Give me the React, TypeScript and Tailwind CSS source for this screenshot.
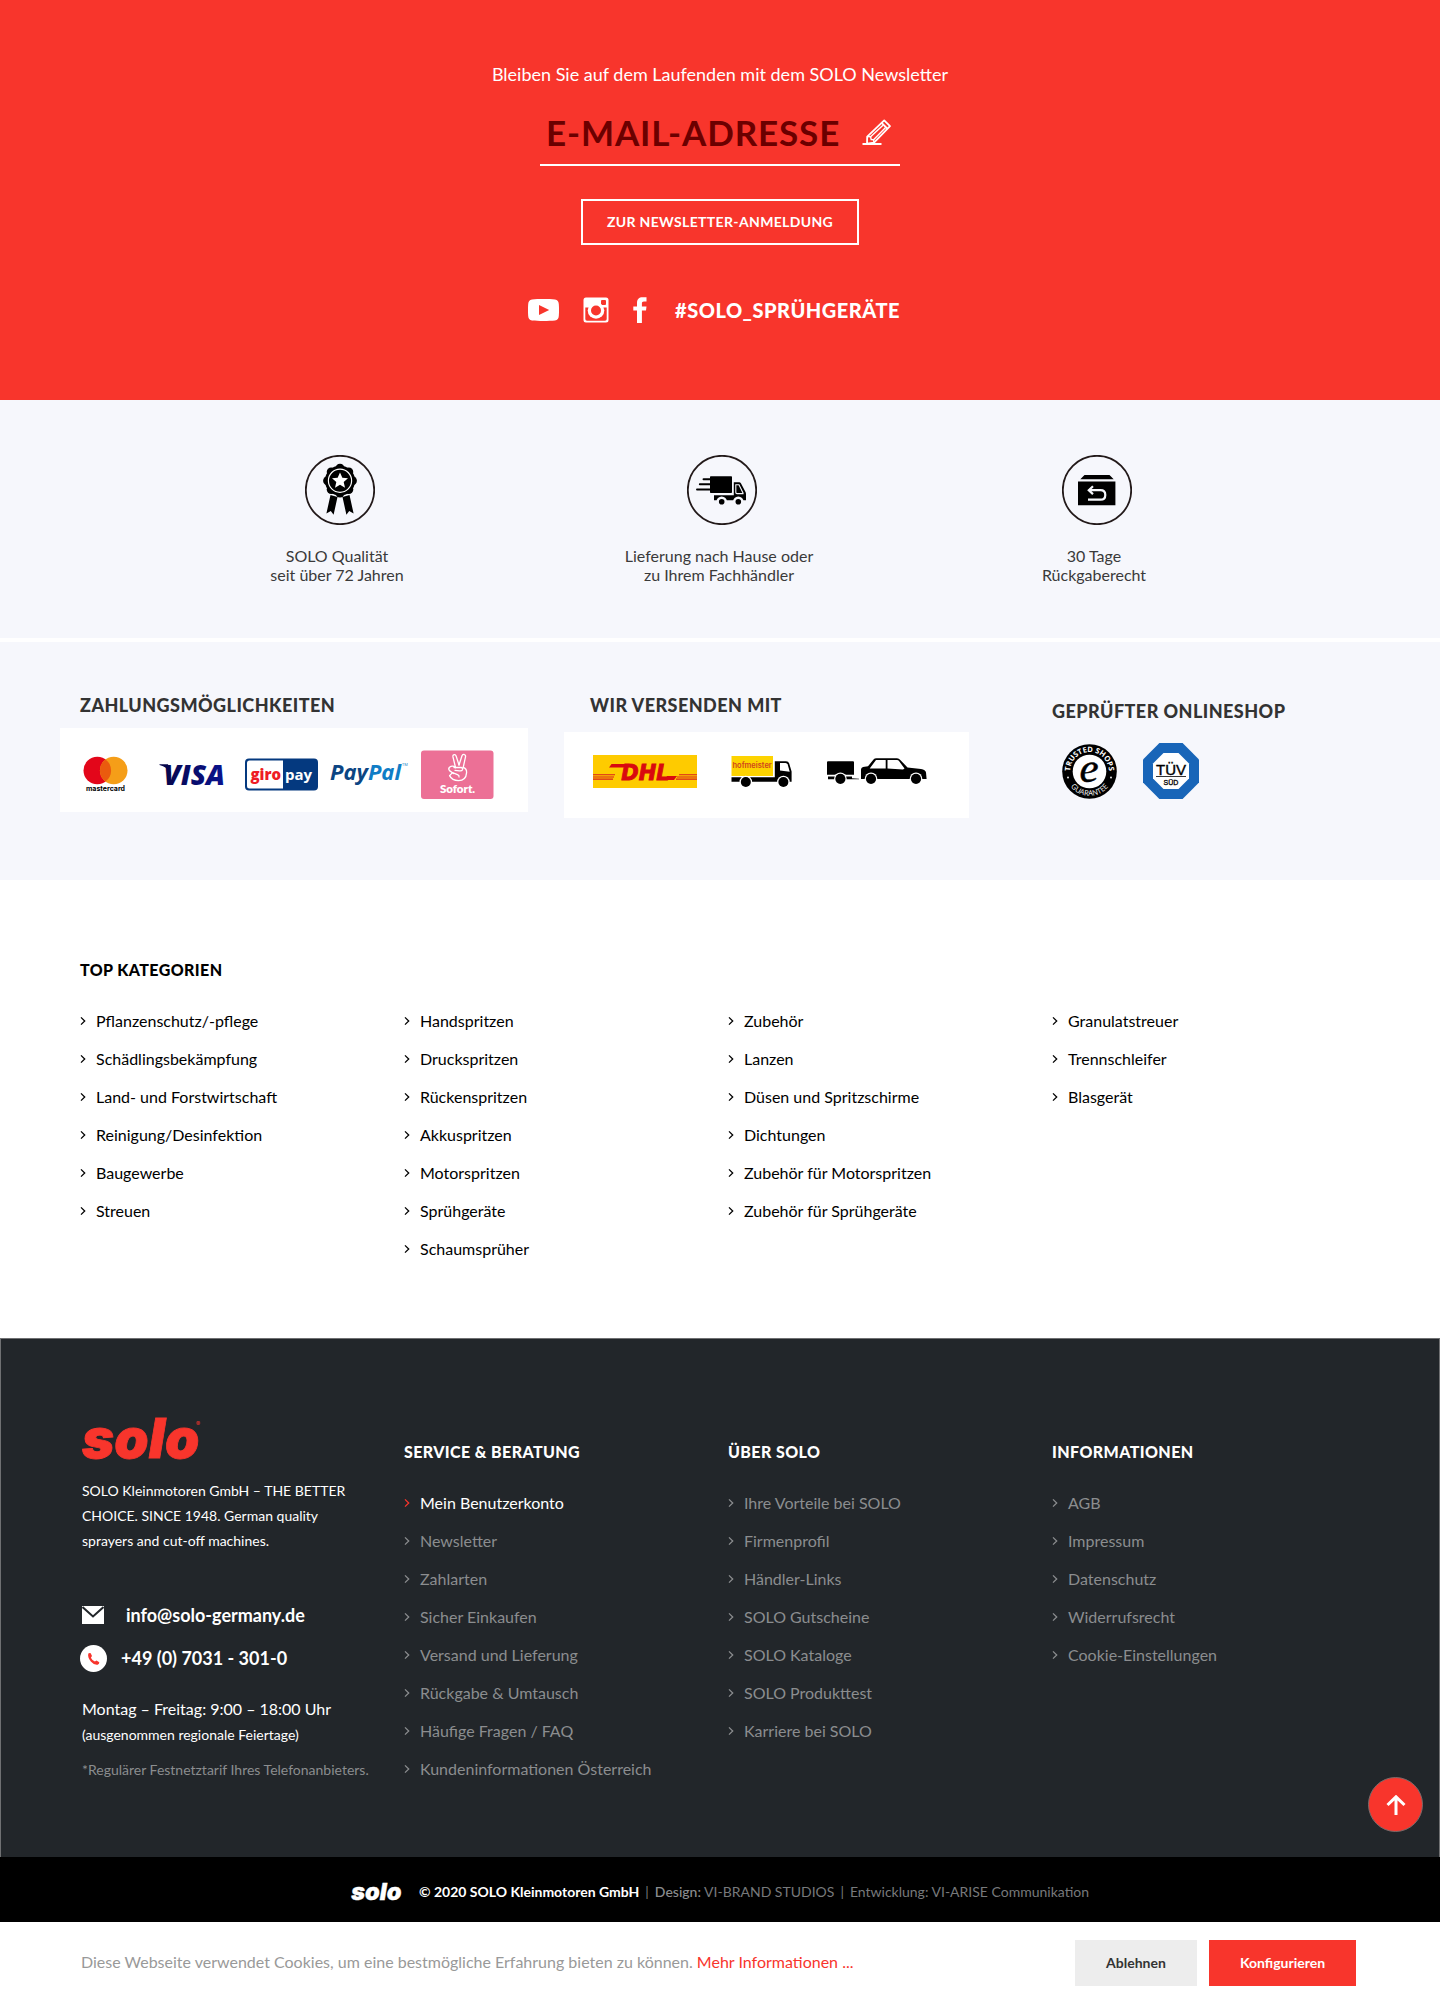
import React from 'react';

const categories: string[][] = [
  ['Pflanzenschutz/-pflege', 'Schädlingsbekämpfung', 'Land- und Forstwirtschaft', 'Reinigung/Desinfektion', 'Baugewerbe', 'Streuen'],
  ['Handspritzen', 'Druckspritzen', 'Rückenspritzen', 'Akkuspritzen', 'Motorspritzen', 'Sprühgeräte', 'Schaumsprüher'],
  ['Zubehör', 'Lanzen', 'Düsen und Spritzschirme', 'Dichtungen', 'Zubehör für Motorspritzen', 'Zubehör für Sprühgeräte'],
  ['Granulatstreuer', 'Trennschleifer', 'Blasgerät'],
];

const footerColumns: { title: string; links: string[] }[] = [
  {
    title: 'SERVICE & BERATUNG',
    links: ['Mein Benutzerkonto', 'Newsletter', 'Zahlarten', 'Sicher Einkaufen', 'Versand und Lieferung', 'Rückgabe & Umtausch', 'Häufige Fragen / FAQ', 'Kundeninformationen Österreich'],
  },
  {
    title: 'ÜBER SOLO',
    links: ['Ihre Vorteile bei SOLO', 'Firmenprofil', 'Händler-Links', 'SOLO Gutscheine', 'SOLO Kataloge', 'SOLO Produkttest', 'Karriere bei SOLO'],
  },
  { title: 'INFORMATIONEN', links: ['AGB', 'Impressum', 'Datenschutz', 'Widerrufsrecht', 'Cookie-Einstellungen'] },
];

function Chevron({ className = '' }: { className?: string }) {
  return (
    <svg aria-hidden="true" width="6" height="10" viewBox="0 0 6 10" className={`shrink-0 ${className}`} fill="none" stroke="currentColor" strokeWidth="1.3">
      <path d="M1 1.4 L4.7 5 L1 8.6" />
    </svg>
  );
}

function LinkList({ items, tone, activeFirst = false }: { items: string[]; tone: string; activeFirst?: boolean }) {
  return (
    <ul>
      {items.map((item, i) => {
        const active = activeFirst && i === 0;
        return (
          <li key={item} className="flex h-[38px] items-center">
            <a href="#" className={`flex items-center gap-[10px] text-base leading-6 whitespace-nowrap ${active ? 'text-white' : tone}`}>
              <Chevron className={active ? 'text-[#f8352c]' : ''} />
              {item}
            </a>
          </li>
        );
      })}
    </ul>
  );
}

function SoloLogo({ className, withMark = false }: { className: string; withMark?: boolean }) {
  return (
    <svg role="img" aria-label="solo" viewBox="0 0 120 42" className={`overflow-visible ${className}`} fill="currentColor">
      <text x="0" y="40" fontFamily="Inter, sans-serif" fontWeight="900" fontStyle="italic" fontSize="55" stroke="currentColor" strokeWidth="0.8">
        solo
      </text>
      {withMark && (
        <text x="114" y="8" fontFamily="Inter, sans-serif" fontSize="6">
          ®
        </text>
      )}
    </svg>
  );
}

function PencilIcon() {
  return (
    <svg aria-hidden="true" width="30" height="28" viewBox="0 0 30 28" className="shrink-0" fill="none" stroke="#fff" strokeWidth="1.8" strokeLinejoin="round">
      <path d="M5.2 18.6 L22.2 2.4 L28 8.2 L12 24.6 L5 25.6 Z" />
      <path d="M19.6 4.8 L25.6 10.8" />
      <path d="M8.6 18.8 L21 7.2 M11.6 21.8 L23.6 9.4" strokeWidth="1.4" />
      <path d="M5.2 18.6 L8.6 18.8 L9.2 21.6 L11.6 21.8 L12 24.6" strokeWidth="1.4" />
      <path d="M0.5 26 H19.5" strokeWidth="2" />
    </svg>
  );
}

function YoutubeIcon() {
  return (
    <svg aria-hidden="true" width="31" height="22" viewBox="0 0 31 22">
      <path fill="#fff" fillRule="evenodd" d="M4 .5 C10 -.1 21 -.1 27 .5 C29.600 .8 30.600 2.500 30.800 5 C31.100 9 31.100 13 30.800 17 C30.600 19.600 29.600 21.200 27 21.500 C21 22.100 10 22.100 4 21.500 C1.400 21.200 .4 19.600 .2 17 C-.1 13 -.1 9 .2 5 C.4 2.500 1.400 .8 4 .5 Z M11 6 V16 L21.200 11 Z" />
    </svg>
  );
}

function InstagramIcon() {
  return (
    <svg aria-hidden="true" width="26" height="26" viewBox="0 0 26 26">
      <rect x="0.500" y="0.500" width="25" height="25" rx="2.500" fill="#fff" />
      <path d="M2.300 10.500 H23.700 V22 Q23.700 23.700 22 23.700 H4 Q2.300 23.700 2.300 22 Z" fill="#f8352c" />
      <rect x="18" y="3" width="5" height="5" rx="1" fill="#f8352c" />
      <circle cx="13" cy="13.500" r="8.300" fill="#fff" />
      <circle cx="13" cy="13.500" r="5" fill="#f8352c" />
    </svg>
  );
}

function FacebookIcon() {
  return (
    <svg aria-hidden="true" width="14" height="26" viewBox="0 0 14 26">
      <path fill="#fff" d="M4 26 V13.600 H0.300 V9.400 H4 V6 C4 2.300 6 .3 9.600 .3 H13.500 V4.500 H11 C9.400 4.500 8.900 5.200 8.900 6.600 V9.400 H13.500 L13 13.600 H8.900 V26 Z" />
    </svg>
  );
}

function MedalIcon() {
  const bumps = [0, 1, 2, 3, 4, 5, 6, 7];
  return (
    <svg aria-hidden="true" width="70" height="70" viewBox="0 0 70 70">
      <circle cx="35" cy="35" r="34.200" fill="none" stroke="#231a1a" strokeWidth="1.800" />
      <path d="M25.500 40 L32.500 42 L28.600 59.800 L25.800 56 L21.400 58.500 Z M44.500 40 L37.500 42 L41.400 59.800 L44.200 56 L48.600 58.500 Z" />
      <circle cx="35" cy="25.700" r="15" />
      {bumps.map((n) => (
        <circle key={n} cx={35 + 12.400 * Math.cos((n * Math.PI) / 4)} cy={25.700 + 12.400 * Math.sin((n * Math.PI) / 4)} r="4.500" />
      ))}
      <circle cx="35" cy="25.700" r="11.600" fill="none" stroke="#fff" strokeWidth="1.200" />
      <path fill="#fff" d="M35 17.400 L37.350 22.700 L43 23.200 L38.700 27 L40 32.700 L35 29.700 L30 32.700 L31.300 27 L27 23.200 L32.650 22.700 Z" />
    </svg>
  );
}

function DeliveryIcon() {
  return (
    <svg aria-hidden="true" width="70" height="70" viewBox="0 0 70 70">
      <circle cx="35" cy="35" r="34.200" fill="none" stroke="#231a1a" strokeWidth="1.800" />
      <rect x="23" y="21.300" width="22" height="16.800" rx="0.800" />
      <path d="M16.500 24.300 H24 M12.800 29.300 H24 M10 34.500 H24" stroke="#000" strokeWidth="1.900" strokeLinecap="round" />
      <path d="M27 40.300 H46.800 V27.300 H52.200 Q53.300 27.300 53.900 28.300 L58 36 Q59 37.600 59 39 V45.300 H27 Z" />
      <path d="M48.800 29.800 H52 L56 38 V38.600 H50 Q48.800 38.600 48.800 37.600 Z" fill="none" stroke="#f6f7fc" strokeWidth="1.100" />
      <circle cx="34.700" cy="46.700" r="5.300" fill="#f6f7fc" />
      <circle cx="51.300" cy="46.700" r="5.300" fill="#f6f7fc" />
      <circle cx="34.700" cy="46.700" r="2.800" />
      <circle cx="51.300" cy="46.700" r="2.800" />
    </svg>
  );
}

function ReturnIcon() {
  return (
    <svg aria-hidden="true" width="70" height="70" viewBox="0 0 70 70">
      <circle cx="35" cy="35" r="34.200" fill="none" stroke="#231a1a" strokeWidth="1.800" />
      <path d="M22.500 20 H47.500 L51.700 24.200 H18.300 Z M16 26.400 H53.400 V50.200 H16 Z" />
      <path d="M31 31.300 L26.800 35.200 L31 39.100 M27 35.200 H38.500 Q43.300 35.200 43.300 39.900 Q43.300 44.700 38.500 44.700 H26" fill="none" stroke="#f6f7fc" strokeWidth="2.200" />
    </svg>
  );
}

function MastercardLogo() {
  return (
    <svg role="img" aria-label="mastercard" width="66" height="38" viewBox="0 0 66 38">
      <circle cx="17.300" cy="14.500" r="13.800" fill="#e3061a" />
      <circle cx="33.700" cy="14.500" r="13.800" fill="#f59e18" />
      <path d="M25.500 3.400 A13.800 13.800 0 0 1 25.500 25.600 A13.800 13.800 0 0 1 25.500 3.400 Z" fill="#ea5b0e" />
      <text x="25.500" y="34.500" textAnchor="middle" fontFamily="Inter, sans-serif" fontWeight="700" fontSize="7">mastercard</text>
    </svg>
  );
}

function VisaLogo() {
  return (
    <svg role="img" aria-label="VISA" width="75" height="46" viewBox="0 -8 75 46">
      <defs>
        <linearGradient id="visa" x1="0" x2="1">
          <stop offset="0" stopColor="#06064a" />
          <stop offset="1" stopColor="#0a1390" />
        </linearGradient>
      </defs>
      <path d="M1.500 4.200 H10 L13 14 Q9 6.500 1.500 5 Z" fill="#06064a" />
      <text x="5.500" y="24.600" fontFamily="'Open Sans', sans-serif" fontWeight="800" fontStyle="italic" fontSize="28" fill="url(#visa)">VISA</text>
    </svg>
  );
}

function GiropayLogo() {
  return (
    <svg role="img" aria-label="giropay" width="73" height="33" viewBox="0 0 73 33">
      <rect x="0" y="0.500" width="73" height="32" rx="4" fill="#04397f" />
      <path d="M4.500 2.500 H38 V30.500 H4.500 Q2 30.500 2 28 V5 Q2 2.500 4.500 2.500 Z" fill="#fff" />
      <text x="5.500" y="21.500" fontFamily="'Open Sans', sans-serif" fontWeight="800" fontSize="15" fill="#ee1c25">giro</text>
      <text x="40" y="21.500" fontFamily="'Open Sans', sans-serif" fontWeight="700" fontSize="15" fill="#fff">pay</text>
    </svg>
  );
}

function PaypalLogo() {
  return (
    <svg role="img" aria-label="PayPal" width="79" height="42" viewBox="0 -6 79 42">
      <text x="0" y="20" fontFamily="'Open Sans', sans-serif" fontWeight="700" fontStyle="italic" fontSize="22" fill="#0b4583">
        Pay<tspan fill="#0f7dc6">Pal</tspan>
      </text>
      <text x="72" y="6" fontFamily="'Open Sans', sans-serif" fontSize="4" fill="#0f7dc6">TM</text>
    </svg>
  );
}

function SofortLogo() {
  return (
    <svg role="img" aria-label="Sofort." width="73" height="49" viewBox="0 0 73 49">
      <rect x="0" y="0.500" width="72.500" height="48.500" rx="3" fill="#ec7096" />
      <g fill="none" stroke="#fff" strokeWidth="1.300" strokeLinecap="round" strokeLinejoin="round">
        <path d="M34.500 17.500 L32 7 Q31.600 5 33.200 4.700 Q34.600 4.400 35.200 6.300 L38 15" />
        <path d="M38 15 L41 5.800 Q41.600 4.100 43.200 4.500 Q44.900 5 44.500 6.800 L42.200 17.500" />
        <path d="M34.500 17.500 Q31.500 15 28.500 17.300 Q27 18.800 28.500 20.600 L32.500 23.500" />
        <path d="M42.200 17.500 Q45.800 18.300 45.600 22.600 Q45 30.600 37.500 30.600 Q31 30.600 28.600 25.600" />
        <path d="M28.600 25.600 L31.500 22.600 L36.500 24.600 Q38.500 25.500 38 27 M33 17.500 H40 Q42 17.700 41.500 19.700 Q41 21 38.500 20.800 L34 20.300" />
      </g>
      <text x="36.500" y="43" textAnchor="middle" fontFamily="Lato, sans-serif" fontWeight="800" fontSize="11.500" fill="#fff">Sofort.</text>
    </svg>
  );
}

function DhlLogo() {
  return (
    <svg role="img" aria-label="DHL" width="104" height="33" viewBox="0 0 104 33">
      <rect width="104" height="33" fill="#fecb00" />
      <path d="M0 19.800 H22 M0 22 H21 M0 24.100 H20 M86 19.800 H104 M84 22 H104 M83 24.100 H104" stroke="#d9201d" strokeWidth="1.100" />
      <path d="M18.500 9 H34 V12.500 H16 Z" fill="#d9090f" />
      <text x="52.500" y="24.700" textAnchor="middle" fontFamily="'DejaVu Sans', sans-serif" fontWeight="700" fontStyle="italic" fontSize="21" fill="#d9090f" stroke="#d9090f" strokeWidth="0.900">DHL</text>
      <path d="M74 21 H84 L81 24.900 H72 Z" fill="#d9090f" />
    </svg>
  );
}

function HofmeisterLogo() {
  return (
    <svg role="img" aria-label="hofmeister" width="62" height="33" viewBox="0 0 62 33">
      <rect x="0.500" y="1" width="41.500" height="20" fill="#fdd300" />
      <path d="M.5 22.300 H43.800 V6.300 H55 Q57.500 6.300 58.200 8.500 L60.600 16.500 V26.800 H.5 Z" />
      <path d="M49 8 H54.500 Q56.200 8 56.700 9.500 L58.700 16.700 L49 15.500 Z" fill="#fff" />
      <circle cx="14.800" cy="27" r="6.300" fill="#fff" />
      <circle cx="52.400" cy="27" r="6.300" fill="#fff" />
      <circle cx="14.800" cy="27" r="5" />
      <circle cx="52.400" cy="27" r="5" />
      <text x="21.200" y="13.300" textAnchor="middle" fontFamily="Inter, sans-serif" fontWeight="600" fontSize="7.500" fill="#d0431c">hofmeister</text>
    </svg>
  );
}

function TrailerLogo() {
  return (
    <svg role="img" aria-label="Auto mit Anhänger" width="101" height="33" viewBox="0 0 101 33">
      <path d="M1 6.300 H26 Q27 6.300 27 7.300 V19.800 H0 V7.300 Q0 6.300 1 6.300 Z M1 21.600 H25 V23.300 L32 23.700 V24.300 L24 24.300 H1 Z" />
      <path d="M34 24 V14.500 Q34 12.500 36 12 L41 11.300 L46.500 4.600 Q47.500 3.300 49.500 3.300 H70 Q72 3.300 73.300 4.900 L80.500 12.500 L94 14 Q98.500 14.800 99 17.500 L99.600 24 Z" />
      <path d="M49 5 H58.700 V13.500 H42.700 Z M60.500 5 H70 Q71.300 5 72 6 L77.500 13.500 L76 14.500 L60.500 13.500 Z" fill="#fff" />
      <circle cx="13.400" cy="23.800" r="6.300" fill="#fff" />
      <circle cx="44" cy="23.800" r="6.300" fill="#fff" />
      <circle cx="89" cy="23.800" r="6.300" fill="#fff" />
      <circle cx="13.400" cy="23.800" r="5.100" />
      <circle cx="44" cy="23.800" r="5.100" />
      <circle cx="89" cy="23.800" r="5.100" />
    </svg>
  );
}

function TrustedShopsBadge() {
  return (
    <svg role="img" aria-label="Trusted Shops Guarantee" width="55" height="55" viewBox="0 0 55 55">
      <defs>
        <path id="arc-top" d="M8.900 32.500 A19.300 19.300 0 1 1 46.100 32.500" />
        <path id="arc-bottom" d="M3.200 27.500 A24.300 24.300 0 0 0 51.800 27.500" />
      </defs>
      <circle cx="27.500" cy="27.500" r="27.300" />
      <circle cx="27.500" cy="27.500" r="16.800" fill="#fff" />
      <g fontFamily="'Open Sans', sans-serif" fontSize="7.500" fill="#fff" textAnchor="middle">
        <text fontWeight="700"><textPath href="#arc-top" startOffset="50%">TRUSTED SHOPS</textPath></text>
        <text fontWeight="400" fontSize="7.500"><textPath href="#arc-bottom" startOffset="50%">GUARANTEE</textPath></text>
      </g>
      <circle cx="6" cy="33.500" r="0.900" fill="#fff" />
      <circle cx="49" cy="33.500" r="0.900" fill="#fff" />
      <text x="27" y="37.500" textAnchor="middle" fontFamily="'Liberation Serif', serif" fontStyle="italic" fontSize="43" stroke="#000" strokeWidth="0.500">e</text>
    </svg>
  );
}

function TuevBadge() {
  return (
    <svg role="img" aria-label="TÜV SÜD" width="56" height="56" viewBox="0 0 56 56">
      <path d="M16.400 0 H39.600 L56 16.400 V39.600 L39.600 56 H16.400 L0 39.600 V16.400 Z" fill="#1865b8" />
      <path d="M20.500 10 H35.500 L46 20.500 V35.500 L35.500 46 H20.500 L10 35.500 V20.500 Z" fill="#fff" />
      <text x="28" y="31.500" textAnchor="middle" fontFamily="'Liberation Sans', sans-serif" fontSize="15" stroke="#000" strokeWidth="0.400">TÜV</text>
      <path d="M13 33.500 H43" stroke="#000" strokeWidth="0.800" />
      <text x="28" y="42" textAnchor="middle" fontFamily="'Liberation Sans', sans-serif" fontSize="7" stroke="#000" strokeWidth="0.300">SÜD</text>
    </svg>
  );
}

function Newsletter() {
  return (
    <section className="flex flex-col items-center bg-[#f8352c] pt-[62px] pb-[75px] text-white">
      <p className="text-lg leading-6">Bleiben Sie auf dem Laufenden mit dem SOLO Newsletter</p>
      <form className="flex w-full flex-col items-center" onSubmit={(e) => e.preventDefault()}>
        <div className="mt-[23px] flex w-full max-w-[360px] items-center border-b-2 border-white pr-2 pb-[9px] pl-[6px]">
          <input
            type="email"
            aria-label="E-Mail-Adresse"
            placeholder="E-MAIL-ADRESSE"
            className="h-[46px] w-0 min-w-0 flex-1 bg-transparent text-[35px] font-bold tracking-wide text-[#6b0000] placeholder:text-[#6b0000] placeholder:opacity-100 focus:outline-none"
          />
          <PencilIcon />
        </div>
        <button type="submit" className="mt-[33px] h-[46px] w-[278px] border-2 border-white text-sm font-bold tracking-wide">
          ZUR NEWSLETTER-ANMELDUNG
        </button>
      </form>
      <div className="mt-[50px] flex items-center gap-6 pr-3">
        <a href="#" aria-label="YouTube"><YoutubeIcon /></a>
        <a href="#" aria-label="Instagram"><InstagramIcon /></a>
        <a href="#" aria-label="Facebook"><FacebookIcon /></a>
        <a href="#" className="pl-1 text-xl leading-[30px] font-black tracking-wide">#SOLO_SPRÜHGERÄTE</a>
      </div>
    </section>
  );
}

function Features() {
  const items = [
    { icon: <MedalIcon />, lines: ['SOLO Qualität', 'seit über 72 Jahren'] },
    { icon: <DeliveryIcon />, lines: ['Lieferung nach Hause oder', 'zu Ihrem Fachhändler'] },
    { icon: <ReturnIcon />, lines: ['30 Tage', 'Rückgaberecht'] },
  ];
  return (
    <section className="grid grid-cols-[380fr_384fr_366fr] bg-[#f6f7fc] pt-[55px] pr-[160px] pb-[54px] pl-[150px]">
      {items.map((item) => (
        <div key={item.lines[0]} className="flex flex-col items-center">
          {item.icon}
          <p className="mt-[21px] pr-[6px] text-center text-base leading-[19px] text-[#3a3a3a]">
            {item.lines[0]}
            <br />
            {item.lines[1]}
          </p>
        </div>
      ))}
    </section>
  );
}

function Partners() {
  const heading = 'text-lg leading-6 font-black tracking-wide text-[#333]';
  return (
    <section className="mt-1 grid grid-cols-[504fr_488fr_328fr] items-start bg-[#f6f7fc] px-[60px] pt-[51px] pb-[62px]">
      <div>
        <h2 className={`pl-5 ${heading}`}>ZAHLUNGSMÖGLICHKEITEN</h2>
        <div className="mt-[11px] mr-9 flex items-center gap-3 bg-white pt-[22px] pb-[13px] pl-5">
          <MastercardLogo />
          <VisaLogo />
          <GiropayLogo />
          <PaypalLogo />
          <SofortLogo />
        </div>
      </div>
      <div>
        <h2 className={`pl-[26px] ${heading}`}>WIR VERSENDEN MIT</h2>
        <div className="mt-[15px] mr-[83px] flex items-center gap-[34px] bg-white pt-[23px] pb-[30px] pl-[29px]">
          <DhlLogo />
          <HofmeisterLogo />
          <TrailerLogo />
        </div>
      </div>
      <div className="pt-[6px]">
        <h2 className={heading}>GEPRÜFTER ONLINESHOP</h2>
        <div className="mt-5 flex items-center gap-[26px] pl-[10px]">
          <TrustedShopsBadge />
          <TuevBadge />
        </div>
      </div>
    </section>
  );
}

function Categories() {
  return (
    <section className="px-20 pt-[78px] pb-[70px] text-black">
      <h2 className="mb-5 text-base leading-6 font-black tracking-wide">TOP KATEGORIEN</h2>
      <div className="grid grid-cols-4 gap-4">
        {categories.map((column) => (
          <LinkList key={column[0]} items={column} tone="text-black" />
        ))}
      </div>
    </section>
  );
}

function Footer() {
  return (
    <footer className="relative border border-b-0 border-[#6f7072] bg-[#22262a] px-[79px] pt-[79px] pb-[69px] text-white">
      <div className="grid grid-cols-4 gap-4">
        <div className="pl-[2px]">
          <SoloLogo className="h-[42px] w-[120px] text-[#f8352c]" withMark />
          <p className="mt-[18px] max-w-[290px] text-sm leading-[25px]">
            SOLO Kleinmotoren GmbH – THE BETTER
            <br />
            CHOICE. SINCE 1948. German quality
            <br />
            sprayers and cut-off machines.
          </p>
          <a href="mailto:info@solo-germany.de" className="mt-[50px] flex items-center gap-[22px] text-lg leading-6 font-bold">
            <svg aria-hidden="true" width="22" height="18" viewBox="0 0 22 18" className="shrink-0">
              <path fill="#fff" d="M0 0 H22 V18 H0 Z" />
              <path d="M.5 1 L11 10.500 L21.500 1" fill="none" stroke="#22262a" strokeWidth="2" />
            </svg>
            info@solo-germany.de
          </a>
          <a href="tel:+49703130101" className="mt-[18px] -ml-[2px] flex items-center gap-[14px] text-lg leading-[27px] font-bold">
            <svg aria-hidden="true" width="27" height="27" viewBox="0 0 27 27" className="shrink-0">
              <circle cx="13.500" cy="13.500" r="13.500" fill="#fff" />
              <path fill="#f8352c" d="M8.300 8.600 Q9.500 7.500 10.700 8.200 L12 11 L10.900 12.700 Q12.200 15.600 14.900 16.500 L16.500 15.600 L19.300 17.200 Q19.400 19 17.700 19.700 Q14 20.300 10.800 16.600 Q7.400 12.500 8.300 8.600 Z" />
            </svg>
            +49 (0) 7031 - 301-0
          </a>
          <p className="mt-[24px] text-base leading-[26px]">Montag – Freitag: 9:00 – 18:00 Uhr</p>
          <p className="text-sm leading-[26px]">(ausgenommen regionale Feiertage)</p>
          <p className="mt-[9px] text-sm leading-[26px] whitespace-nowrap text-[#8b8d8f]">*Regulärer Festnetztarif Ihres Telefonanbieters.</p>
        </div>
        {footerColumns.map((column, i) => (
          <div key={column.title} className="pt-[22px]">
            <h2 className="mb-5 text-base leading-6 font-black tracking-wide">{column.title}</h2>
            <LinkList items={column.links} tone="text-[#8b8d8f]" activeFirst={i === 0} />
          </div>
        ))}
      </div>
      <button
        type="button"
        aria-label="Nach oben"
        className="absolute right-4 bottom-[25px] flex size-[55px] items-center justify-center rounded-full border border-[#7b6a6a] bg-[#f8352c]"
      >
        <svg aria-hidden="true" width="20" height="20" viewBox="0 0 20 20" fill="none" stroke="#fff" strokeWidth="3">
          <path d="M10 20 V2 M1.500 10 L10 1.800 L18.500 10" />
        </svg>
      </button>
    </footer>
  );
}

function Copyright() {
  return (
    <div className="flex h-[65px] items-center justify-center gap-4 bg-black pt-1 text-sm leading-5 text-[#77797b]">
      <SoloLogo className="h-[18px] w-[52px] text-white" />
      <p className="flex gap-[6px]">
        <strong className="font-bold text-white">© 2020 SOLO Kleinmotoren GmbH</strong>
        <span>|</span>
        <a href="#"><span className="font-medium text-[#8b8d8f]">Design:</span> VI-BRAND STUDIOS</a>
        <span>|</span>
        <a href="#">Entwicklung: VI-ARISE Communikation</a>
      </p>
    </div>
  );
}

function CookieBar() {
  return (
    <div className="flex h-[81px] items-center justify-between bg-white pr-[84px] pl-[81px]">
      <p className="pb-[2px] text-base leading-6 text-[#999]">
        Diese Webseite verwendet Cookies, um eine bestmögliche Erfahrung bieten zu können.{' '}
        <a href="#" className="text-[#f8352c]">Mehr Informationen ...</a>
      </p>
      <div className="flex gap-3 text-sm font-bold">
        <button type="button" className="h-[46px] w-[122px] bg-[#ededed] text-[#333]">Ablehnen</button>
        <button type="button" className="h-[46px] w-[147px] bg-[#f8352c] text-white">Konfigurieren</button>
      </div>
    </div>
  );
}

export default function App() {
  return (
    <main className="bg-white font-[Lato,sans-serif]">
      <Newsletter />
      <Features />
      <Partners />
      <Categories />
      <Footer />
      <Copyright />
      <CookieBar />
    </main>
  );
}
